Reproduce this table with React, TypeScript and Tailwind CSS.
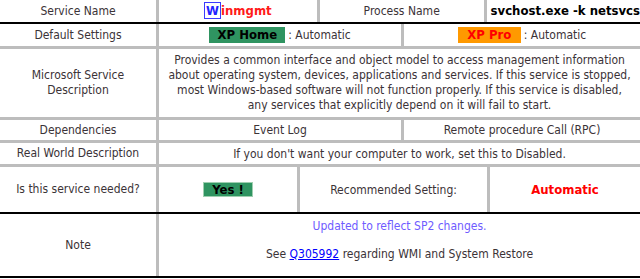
const sep = 'border-l-[3px] border-[#bdbdbd]'

function Row({ h, children, line }: { h: string; children: React.ReactNode; line: 'grey' | 'black' }) {
  return (
    <div className={`flex ${h} ${line === 'black' ? 'border-b-2 border-black' : 'border-b-[3px] border-[#bdbdbd]'}`}>
      {children}
    </div>
  )
}

function Label({ children }: { children: React.ReactNode }) {
  return <div className="w-[156px] shrink-0 flex items-center justify-center text-center leading-[15px]">{children}</div>
}

export default function App() {
  return (
    <div className="w-[640px] h-[279px] bg-white text-[#3b3337] text-[12px] font-['DejaVu_Sans_Condensed','DejaVu_Sans',sans-serif] overflow-hidden">
      <Row h="h-[24px]" line="black">
        <Label>Service Name</Label>
        <div className={`${sep} w-[161px] flex items-center justify-center`}>
          <span className="font-bold text-[13px] text-[#ff1a1a]">
            <span className="text-[#2323ff] border border-[#3b3bff] px-[1px]">W</span>inmgmt
          </span>
        </div>
        <div className={`${sep} w-[167px] flex items-center justify-center`}>Process Name</div>
        <div className={`${sep} flex-1 flex items-center pl-[4px] font-bold text-[13px] text-black whitespace-nowrap`}>
          svchost.exe -k netsvcs
        </div>
      </Row>

      <Row h="h-[25px]" line="grey">
        <Label>Default Settings</Label>
        <div className={`${sep} w-[245px] flex items-center justify-center`}>
          <span className="bg-[#2f9461] text-black font-bold text-[13px] w-[76px] h-[16px] flex items-center justify-center">XP Home</span>
          <span className="ml-[3px]">: Automatic</span>
        </div>
        <div className={`${sep} flex-1 flex items-center justify-center`}>
          <span className="bg-[#ff9900] text-[#ff0000] font-bold text-[13px] w-[63px] h-[16px] flex items-center justify-center">XP Pro</span>
          <span className="ml-[3px]">: Automatic</span>
        </div>
      </Row>

      <Row h="h-[71px]" line="grey">
        <Label>
          Microsoft Service
          <br />
          Description
        </Label>
        <div className={`${sep} flex-1 flex items-center justify-center text-center leading-[15px] whitespace-nowrap`}>
          <p>
            Provides a common interface and object model to access management information
            <br />
            about operating system, devices, applications and services. If this service is stopped,
            <br />
            most Windows-based software will not function properly. If this service is disabled,
            <br />
            any services that explicitly depend on it will fail to start.
          </p>
        </div>
      </Row>

      <Row h="h-[23px]" line="grey">
        <Label>Dependencies</Label>
        <div className={`${sep} w-[245px] flex items-center justify-center`}>Event Log</div>
        <div className={`${sep} flex-1 flex items-center justify-center`}>Remote procedure Call (RPC)</div>
      </Row>

      <Row h="h-[24px]" line="grey">
        <Label>Real World Description</Label>
        <div className={`${sep} flex-1 flex items-center justify-center`}>
          If you don't want your computer to work, set this to Disabled.
        </div>
      </Row>

      <Row h="h-[47px]" line="black">
        <Label>Is this service needed?</Label>
        <div className={`${sep} w-[141px] flex items-center justify-center`}>
          <span className="bg-[#2f9461] text-black font-bold text-[13px] w-[50px] h-[15px] flex items-center justify-center border border-[#9fcfb0]">
            Yes !
          </span>
        </div>
        <div className={`${sep} w-[190px] flex items-center justify-center`}>Recommended Setting:</div>
        <div className={`${sep} flex-1 flex items-center justify-center font-bold text-[13px] text-[#ff0000]`}>Automatic</div>
      </Row>

      <Row h="h-[64px]" line="black">
        <Label>Note</Label>
        <div className={`${sep} flex-1 flex flex-col items-center pt-[5px]`}>
          <div className="text-[#6f5cff] leading-[15px]">Updated to reflect SP2 changes.</div>
          <div className="mt-[13px] leading-[15px]">
            See <span className="text-[#0000ff] underline">Q305992</span> regarding WMI and System Restore
          </div>
        </div>
      </Row>
    </div>
  )
}
